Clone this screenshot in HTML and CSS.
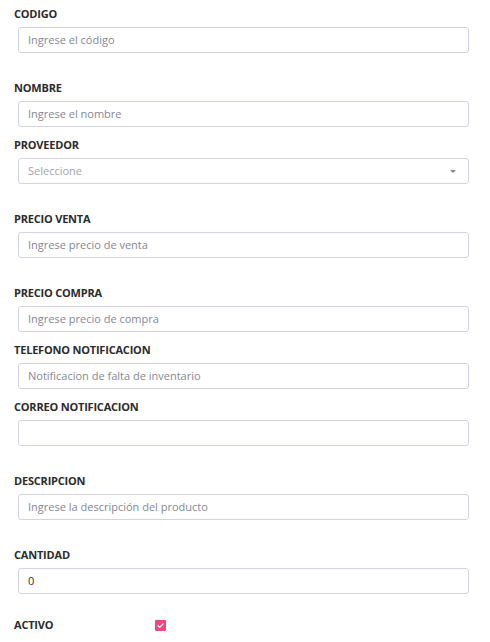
FILE: index.html
```html
<!DOCTYPE html>
<html lang="es">
<head>
<meta charset="utf-8">
<link rel="stylesheet" href="styles.css">
</head>
<body>
<form class="form">
  <div class="group">
    <label class="label">CODIGO</label>
    <div class="input placeholder">Ingrese el código</div>
  </div>
  <div class="group lg">
    <label class="label">NOMBRE</label>
    <div class="input placeholder">Ingrese el nombre</div>
  </div>
  <div class="group sm">
    <label class="label">PROVEEDOR</label>
    <div class="input select placeholder light">Seleccione<span class="caret"></span></div>
  </div>
  <div class="group lg">
    <label class="label">PRECIO VENTA</label>
    <div class="input placeholder">Ingrese precio de venta</div>
  </div>
  <div class="group lg">
    <label class="label">PRECIO COMPRA</label>
    <div class="input placeholder">Ingrese precio de compra</div>
  </div>
  <div class="group sm">
    <label class="label">TELEFONO NOTIFICACION</label>
    <div class="input placeholder">Notificacion de falta de inventario</div>
  </div>
  <div class="group sm">
    <label class="label">CORREO NOTIFICACION</label>
    <div class="input"></div>
  </div>
  <div class="group lg">
    <label class="label">DESCRIPCION</label>
    <div class="input placeholder">Ingrese la descripción del producto</div>
  </div>
  <div class="group lg">
    <label class="label">CANTIDAD</label>
    <div class="input value">0</div>
  </div>
  <div class="group last check-row">
    <label class="label">ACTIVO</label>
    <span class="checkbox"><svg width="11" height="11" viewBox="0 0 11 11"><path d="M3 5.8 L4.7 7.4 L8.2 3.8" fill="none" stroke="#fff" stroke-width="1.2" stroke-linecap="round" stroke-linejoin="round"/></svg></span>
  </div>
</form>
</body>
</html>
```
FILE: styles.css
```css
* { box-sizing: border-box; }
body {
  margin: 0;
  background: #fff;
  font-family: "Open Sans", "Noto Sans", sans-serif;
}
.form {
  padding: 7px 21px 0 14px;
  display: flex;
  flex-direction: column;
}
.group {
  display: flex;
  flex-direction: column;
}
.group.lg { margin-top: 28px; }
.group.sm { margin-top: 11px; }
.group.last { margin-top: 24px; }
.label {
  font-size: 11px;
  line-height: 14px;
  font-weight: 700;
  color: #2b2b2b;
  letter-spacing: -0.2px;
}
.input {
  margin-top: 6px;
  margin-left: 4px;
  height: 26px;
  border: 1px solid #d1d3e2;
  border-radius: 3px;
  padding: 0 9px;
  font-size: 11px;
  line-height: 24px;
  color: #6e707e;
  position: relative;
}
.placeholder { color: #858796; }
.light { color: #a3a4ae; }
.value { color: #333; }
.caret {
  position: absolute;
  right: 12px;
  top: 11px;
  width: 0;
  height: 0;
  border-left: 3px solid transparent;
  border-right: 3px solid transparent;
  border-top: 3px solid #888;
}
.check-row {
  flex-direction: row;
  align-items: center;
}
.checkbox {
  margin-left: 102px;
  width: 11px;
  height: 11px;
  background: #f2467f;
  border-radius: 1px;
  display: flex;
}
```
